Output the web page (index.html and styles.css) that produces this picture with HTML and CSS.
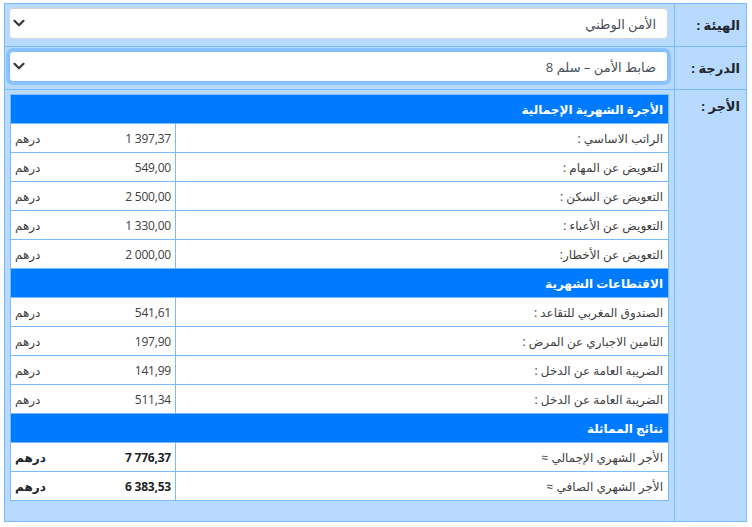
FILE: index.html
```html
<!DOCTYPE html>
<html lang="ar" dir="rtl">
<head>
<meta charset="utf-8">
<title>الأجر</title>
<link rel="stylesheet" href="styles.css">
</head>
<body>
<div class="page">
  <div class="form">
    <div class="label">الهيئة :</div>
    <div class="field">
      <div class="select-wrap">
        <select class="select"><option>الأمن الوطني</option></select>
        <svg class="chev" width="12" height="8" viewBox="0 0 12 8"><path d="M1.5 1.8l4.5 4.4 4.5-4.4" fill="none" stroke="#343a40" stroke-width="2.2" stroke-linecap="round" stroke-linejoin="round"/></svg>
      </div>
    </div>
    <div class="label">الدرجة :</div>
    <div class="field">
      <div class="select-wrap">
        <select class="select focus"><option>ضابط الأمن – سلم 8</option></select>
        <svg class="chev" width="12" height="8" viewBox="0 0 12 8"><path d="M1.5 1.8l4.5 4.4 4.5-4.4" fill="none" stroke="#343a40" stroke-width="2.2" stroke-linecap="round" stroke-linejoin="round"/></svg>
      </div>
    </div>
    <div class="label label-top">الأجر :</div>
    <div class="field field-pay">
      <div class="pay">
        <div class="head">الأجرة الشهرية الإجمالية</div>
        <div class="name">الراتب الاساسي :</div>
        <div class="val"><span class="num">1&nbsp;397,37</span><span>درهم</span></div>
        <div class="name">التعويض عن المهام :</div>
        <div class="val"><span class="num">549,00</span><span>درهم</span></div>
        <div class="name">التعويض عن السكن :</div>
        <div class="val"><span class="num">2&nbsp;500,00</span><span>درهم</span></div>
        <div class="name">التعويض عن الأعباء :</div>
        <div class="val"><span class="num">1&nbsp;330,00</span><span>درهم</span></div>
        <div class="name">التعويض عن الأخطار:</div>
        <div class="val"><span class="num">2&nbsp;000,00</span><span>درهم</span></div>

        <div class="head">الاقتطاعات الشهرية</div>
        <div class="name">الصندوق المغربي للتقاعد :</div>
        <div class="val"><span class="num">541,61</span><span>درهم</span></div>
        <div class="name">التامين الاجباري عن المرض :</div>
        <div class="val"><span class="num">197,90</span><span>درهم</span></div>
        <div class="name">الضريبة العامة عن الدخل :</div>
        <div class="val"><span class="num">141,99</span><span>درهم</span></div>
        <div class="name">الضريبة العامة عن الدخل :</div>
        <div class="val"><span class="num">511,34</span><span>درهم</span></div>

        <div class="head">نتائج المماثلة</div>
        <div class="name">الأجر الشهري الإجمالي ≈</div>
        <div class="val bold"><span class="num">7&nbsp;776,37</span><span>درهم</span></div>
        <div class="name">الأجر الشهري الصافي ≈</div>
        <div class="val bold"><span class="num">6&nbsp;383,53</span><span>درهم</span></div>
      </div>
    </div>
  </div>
</div>
</body>
</html>
```
FILE: styles.css
```css
* { box-sizing: border-box; }
html, body { margin: 0; padding: 0; background: #fff; }
body {
  font-family: "Open Sans", "DejaVu Sans", sans-serif;
  font-size: 12px;
  color: #212529;
}
.page {
  padding: 3px 5px 0 0;
  direction: rtl;
}
.form {
  width: 743px;
  display: grid;
  grid-template-columns: 71px 669px;
  grid-template-rows: 42px 42px 431px;
  gap: 1px;
  background: #7abaff;
  border: 1px solid #7abaff;
}
.label {
  background: #b8daff;
  font-weight: bold;
  font-size: 13px;
  color: #212529;
  padding: 0 6px 0 0;
  display: flex;
  align-items: center;
}
.label-top {
  align-items: flex-start;
  padding-top: 7px;
}
.field {
  background: #b8daff;
  padding: 4px 5px 0 5px;
}
.select-wrap {
  position: relative;
  margin: 0 1px 0 -1px;
}
.select {
  display: block;
  width: 100%;
  height: 31px;
  appearance: none;
  -webkit-appearance: none;
  background: #fff;
  border: 1px solid #ced4da;
  border-radius: 4px;
  padding: 0 11px 0 36px;
  font-family: "Open Sans", "DejaVu Sans", sans-serif;
  font-size: 13px;
  color: #495057;
  direction: rtl;
  outline: none;
}
.select.focus {
  border-color: #80bdff;
  box-shadow: 0 0 0 3px rgba(0, 123, 255, 0.25);
}
.chev {
  position: absolute;
  left: 4px;
  top: 11px;
  pointer-events: none;
}
.pay {
  display: grid;
  grid-template-columns: 492px 164px;
  grid-auto-rows: 28px;
  gap: 1px;
  background: #7abaff;
  border: 1px solid #7abaff;
}
.head {
  grid-column: 1 / -1;
  background: #007bff;
  color: #fff;
  font-weight: bold;
  font-size: 12px;
  padding: 0 5px 0 0;
  display: flex;
  align-items: center;
}
.name {
  background: #fff;
  color: #404040;
  padding: 0 5px 0 0;
  display: flex;
  align-items: center;
}
.val {
  background: #fff;
  color: #404040;
  padding: 0 4px;
  display: flex;
  align-items: center;
  justify-content: space-between;
}
.val.bold { font-weight: bold; color: #212529; }
.num {
  direction: ltr;
  unicode-bidi: isolate;
  letter-spacing: -0.2px;
}
```
